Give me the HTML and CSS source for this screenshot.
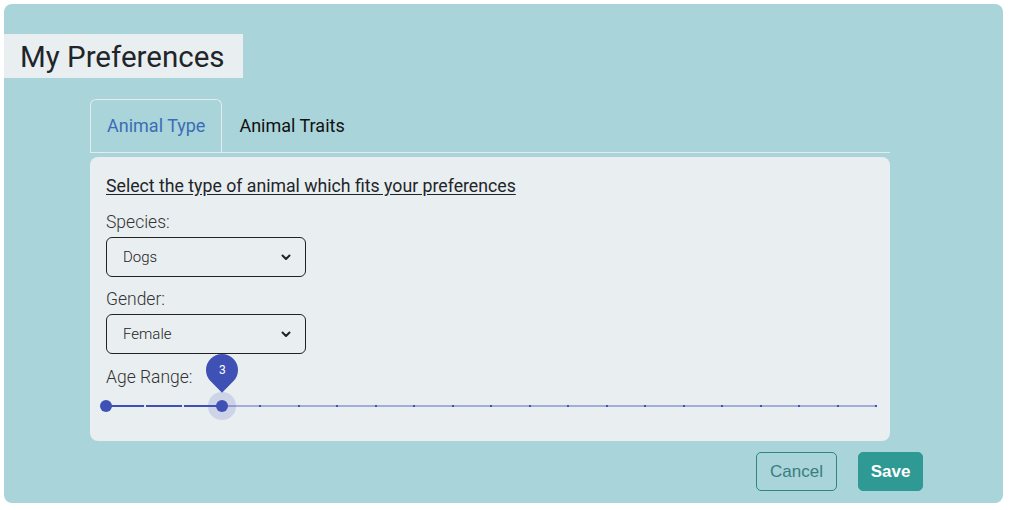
FILE: index.html
```html
<!DOCTYPE html>
<html lang="en">
<head>
<meta charset="utf-8">
<title>My Preferences</title>
<link rel="stylesheet" href="styles.css">
</head>
<body>
<div class="card">
  <h1 class="title">My Preferences</h1>
  <div class="content">
    <ul class="tabs">
      <li class="tab active">Animal Type</li>
      <li class="tab">Animal Traits</li>
    </ul>
    <div class="panel">
      <p class="heading">Select the type of animal which fits your preferences</p>
      <div class="label label-first">Species:</div>
      <div class="select">
        <span>Dogs</span>
        <svg class="chev" width="10" height="7" viewBox="0 0 10 7"><path d="M1.5 1.5 L5 5 L8.5 1.5" fill="none" stroke="#222" stroke-width="2" stroke-linecap="round" stroke-linejoin="round"/></svg>
      </div>
      <div class="label">Gender:</div>
      <div class="select">
        <span>Female</span>
        <svg class="chev" width="10" height="7" viewBox="0 0 10 7"><path d="M1.5 1.5 L5 5 L8.5 1.5" fill="none" stroke="#222" stroke-width="2" stroke-linecap="round" stroke-linejoin="round"/></svg>
      </div>
      <div class="label label-age">Age Range:</div>
      <div class="slider">
        <div class="track">
          <div class="fill" style="width:15%"></div>
          <div class="marks">
            <i class="m on"></i><i class="m on"></i><i class="m on"></i><i class="m on"></i>
            <i class="m"></i><i class="m"></i><i class="m"></i><i class="m"></i><i class="m"></i>
            <i class="m"></i><i class="m"></i><i class="m"></i><i class="m"></i><i class="m"></i>
            <i class="m"></i><i class="m"></i><i class="m"></i><i class="m"></i><i class="m"></i>
            <i class="m"></i><i class="m"></i>
          </div>
          <span class="thumb" style="left:0%"></span>
          <span class="thumb focus" style="left:15%">
            <span class="bubble"><span class="bubble-text">3</span></span>
          </span>
        </div>
      </div>
    </div>
    <div class="actions">
      <button class="btn btn-cancel">Cancel</button>
      <button class="btn btn-save">Save</button>
    </div>
  </div>
</div>
</body>
</html>
```

FILE: styles.css
```css
* { box-sizing: border-box; }
html, body { margin: 0; padding: 0; background: #ffffff; }
body { font-family: Roboto, "Liberation Sans", sans-serif; color: #212529; }

.card {
  margin: 4px;
  width: 999px;
  height: 499px;
  background: #a9d4d9;
  border-radius: 8px;
  padding-top: 30px;
}

.title {
  margin: 0;
  width: 239px;
  height: 44px;
  padding-left: 16px;
  background: #e9eef1;
  font-size: 29.5px;
  font-weight: 400;
  line-height: 46px;
  color: #212529;
}

.content {
  margin: 21px 0 0 86px;
  width: 800px;
}

.tabs {
  list-style: none;
  margin: 0;
  padding: 0;
  display: flex;
  border-bottom: 1px solid #e4eaee;
  height: 54px;
}
.tab {
  height: 53px;
  padding: 0 16px;
  font-size: 18px;
  line-height: 51px;
  color: #111;
  border: 1px solid transparent;
  border-bottom: none;
  border-radius: 6px 6px 0 0;
}
.tab.active {
  color: #3b6db6;
  border-color: #e4eaee;
}

.panel {
  margin-top: 4px;
  height: 284px;
  background: #e9eef1;
  border-radius: 8px;
  padding: 17px 16px 0;
}

.heading {
  margin: 0;
  font-size: 17.7px;
  line-height: 24px;
  text-decoration: underline;
  text-underline-offset: 2px;
  color: #212529;
}

.label {
  margin-top: 10px;
  font-size: 17.5px;
  font-weight: 300;
  line-height: 24px;
  color: #333;
}
.label-first { margin-top: 12px; }
.label-age { margin-top: 11px; }

.select {
  margin-top: 3px;
  width: 200px;
  height: 40px;
  border: 1px solid #222;
  border-radius: 6px;
  display: flex;
  align-items: center;
  justify-content: space-between;
  padding: 0 14px 0 16px;
  font-size: 15px;
  font-weight: 300;
  color: #222;
}
.chev { display: block; }

.slider {
  margin-top: 2px;
  height: 30px;
  display: flex;
  align-items: center;
  width: 770px;
}
.track {
  position: relative;
  width: 100%;
  height: 2px;
  background: #a4acd9;
}
.fill {
  height: 2px;
  background: #3f51b5;
}
.marks {
  position: absolute;
  left: -1px;
  right: -1px;
  top: 0;
  height: 2px;
  display: flex;
  justify-content: space-between;
}
.m {
  display: block;
  width: 2px;
  height: 2px;
  background: #3f51b5;
}
.m.on { background: #dfe4ee; }
.m:first-child { background: transparent; }

.thumb {
  position: absolute;
  top: 1px;
  width: 12px;
  height: 12px;
  margin: -6px 0 0 -6px;
  border-radius: 50%;
  background: #3f51b5;
}
.thumb.focus {
  box-shadow: 0 0 0 8px rgba(63, 81, 181, 0.16);
}
.bubble {
  position: absolute;
  left: -10px;
  top: -46px;
  width: 32px;
  height: 32px;
  border-radius: 50% 50% 50% 0;
  background: #3f51b5;
  transform: rotate(-45deg);
  display: flex;
  align-items: center;
  justify-content: center;
}
.bubble-text {
  transform: rotate(45deg);
  color: #fff;
  font-size: 12px;
  font-family: Roboto, sans-serif;
}

.actions {
  margin-top: 11px;
  width: 833px;
  display: flex;
  justify-content: flex-end;
  gap: 21px;
}
.btn {
  height: 39px;
  border-radius: 5px;
  font-family: "Liberation Sans", Arial, sans-serif;
  font-size: 17px;
  cursor: pointer;
}
.btn-cancel {
  width: 81px;
  background: transparent;
  border: 1px solid #2f8583;
  color: #3a7d7e;
}
.btn-save {
  width: 65px;
  background: #2f9994;
  border: 1px solid #2f9994;
  color: #fff;
  font-weight: 700;
}
```
